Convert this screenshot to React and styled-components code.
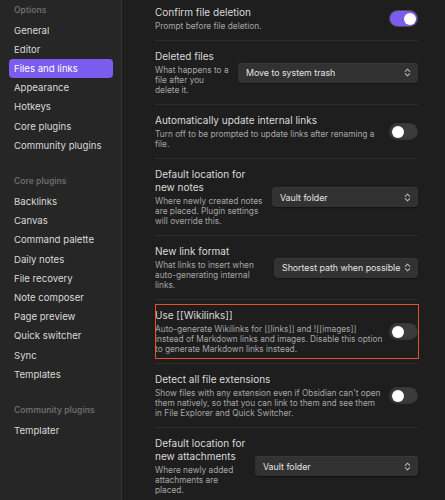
import styled, { createGlobalStyle, css } from "styled-components";

const GlobalStyle = createGlobalStyle`
  html, body {
    margin: 0;
    padding: 0;
    background: #1e1e1e;
    font-family: Inter, "Liberation Sans", sans-serif;
    -webkit-font-smoothing: antialiased;
  }
`;

const Layout = styled.div`
  display: flex;
  height: 100vh;
  overflow: hidden;
`;

const Sidebar = styled.nav`
  width: 122px;
  flex-shrink: 0;
  background: #262626;
  border-right: 1px solid #323232;
  padding-top: 2.5px;
  box-sizing: border-box;
`;

const Group = styled.div`
  & + & {
    margin-top: 19px;
  }
`;

const GroupTitle = styled.div`
  padding: 1px 14px;
  line-height: 13px;
  font-size: 8.6px;
  font-weight: 600;
  color: #6b6b6b;
  margin-bottom: 3px;
`;

const NavItem = styled.div`
  margin: 0 8px 0 9px;
  padding: 3px 5px;
  line-height: 13.2px;
  font-size: 9.6px;
  border-radius: 4px;
  color: ${(p) => (p.$active ? "#ffffff" : "#dadada")};
  background: ${(p) => (p.$active ? "#7b5cef" : "transparent")};
`;

const Main = styled.main`
  flex: 1;
  padding: 0 27px 0 33px;
  background: #1e1e1e;
`;

const Item = styled.div`
  position: relative;
  display: flex;
  align-items: center;
  gap: ${(p) => (p.$tight ? "3px" : "8px")};
  padding: 9px 0;
  border-top: 1px solid #2d2d2d;

  &:first-child {
    border-top: none;
    padding-top: 6px;
  }

  ${(p) =>
    p.$marked &&
    css`
      &::after {
        content: "";
        position: absolute;
        left: 0;
        right: -1px;
        top: 3.5px;
        bottom: 4px;
        border: 1.5px solid #e4512c;
        pointer-events: none;
      }
    `}
`;

const Info = styled.div`
  flex: ${(p) => (p.$w ? "none" : "1")};
  width: ${(p) => (p.$w ? `${p.$w}px` : "auto")};
  min-width: 0;
`;

const Name = styled.div`
  font-size: 10px;
  line-height: 13px;
  color: #dadada;
  margin-bottom: 2px;
`;

const Desc = styled.div`
  font-size: 8.3px;
  line-height: 10px;
  color: #a6a6a6;
`;

const Toggle = styled.div`
  position: relative;
  flex-shrink: 0;
  width: 27px;
  height: 15px;
  border-radius: 8px;
  margin-left: auto;
  margin-right: 1px;
  background: ${(p) => (p.$on ? "#7b5cef" : "#3b3b3b")};
  box-shadow: 0 0 0 1px ${(p) => (p.$on ? "#4a4a4a" : "#333")};

  &::after {
    content: "";
    position: absolute;
    top: 1.5px;
    left: ${(p) => (p.$on ? "13.5px" : "1.5px")};
    width: 12px;
    height: 12px;
    border-radius: 50%;
    background: #ffffff;
  }
`;

const Select = styled.div`
  flex: 1;
  display: flex;
  align-items: center;
  justify-content: space-between;
  height: 20px;
  padding: 0 7px 0 8px;
  border-radius: 4px;
  background: #323232;
  box-shadow: 0 1px 1px rgba(0, 0, 0, 0.35), inset 0 0.5px 0 #3e3e3e;
  font-size: 8.8px;
  color: #e4e4e4;
  white-space: nowrap;
`;

const Arrows = () => (
  <svg width="7" height="9" viewBox="0 0 7 9" fill="none" stroke="#b5b5b5" strokeWidth="1.1" strokeLinecap="round" strokeLinejoin="round">
    <path d="M1.3 3.3 3.5 1.2 5.7 3.3" />
    <path d="M1.3 5.7 3.5 7.8 5.7 5.7" />
  </svg>
);

const navGroups = [
  {
    title: "Options",
    items: ["General", "Editor", "Files and links", "Appearance", "Hotkeys", "Core plugins", "Community plugins"],
  },
  {
    title: "Core plugins",
    items: ["Backlinks", "Canvas", "Command palette", "Daily notes", "File recovery", "Note composer", "Page preview", "Quick switcher", "Sync", "Templates"],
  },
  { title: "Community plugins", items: ["Templater"] },
];

const settings = [
  { name: "Confirm file deletion", desc: "Prompt before file deletion.", toggle: true, on: true },
  { name: "Deleted files", desc: "What happens to a file after you delete it.", select: "Move to system trash", w: 75 },
  {
    name: "Automatically update internal links",
    desc: "Turn off to be prompted to update links after renaming a file.",
    toggle: true,
    w: 226,
  },
  {
    name: "Default location for new notes",
    desc: "Where newly created notes are placed. Plugin settings will override this.",
    select: "Vault folder",
    w: 109,
  },
  {
    name: "New link format",
    desc: "What links to insert when auto-generating internal links.",
    select: "Shortest path when possible",
    w: 111,
  },
  {
    name: "Use [[Wikilinks]]",
    desc: "Auto-generate Wikilinks for [[links]] and ![[images]] instead of Markdown links and images. Disable this option to generate Markdown links instead.",
    toggle: true,
    marked: true,
  },
  {
    name: "Detect all file extensions",
    desc: "Show files with any extension even if Obsidian can't open them natively, so that you can link to them and see them in File Explorer and Quick Switcher.",
    toggle: true,
    w: 226,
  },
  {
    name: "Default location for new attachments",
    desc: "Where newly added attachments are placed.",
    select: "Vault folder",
    w: 92,
  },
];

export default function App() {
  return (
    <>
      <GlobalStyle />
      <Layout>
        <Sidebar>
          {navGroups.map((g) => (
            <Group key={g.title}>
              <GroupTitle>{g.title}</GroupTitle>
              {g.items.map((it) => (
                <NavItem key={it} $active={it === "Files and links"}>
                  {it}
                </NavItem>
              ))}
            </Group>
          ))}
        </Sidebar>
        <Main>
          {settings.map((s) => (
            <Item key={s.name} $marked={s.marked} $tight={s.toggle}>
              <Info $w={s.w}>
                <Name>{s.name}</Name>
                <Desc>{s.desc}</Desc>
              </Info>
              {s.toggle ? (
                <Toggle $on={s.on} />
              ) : (
                <Select>
                  <span>{s.select}</span>
                  <Arrows />
                </Select>
              )}
            </Item>
          ))}
        </Main>
      </Layout>
    </>
  );
}
